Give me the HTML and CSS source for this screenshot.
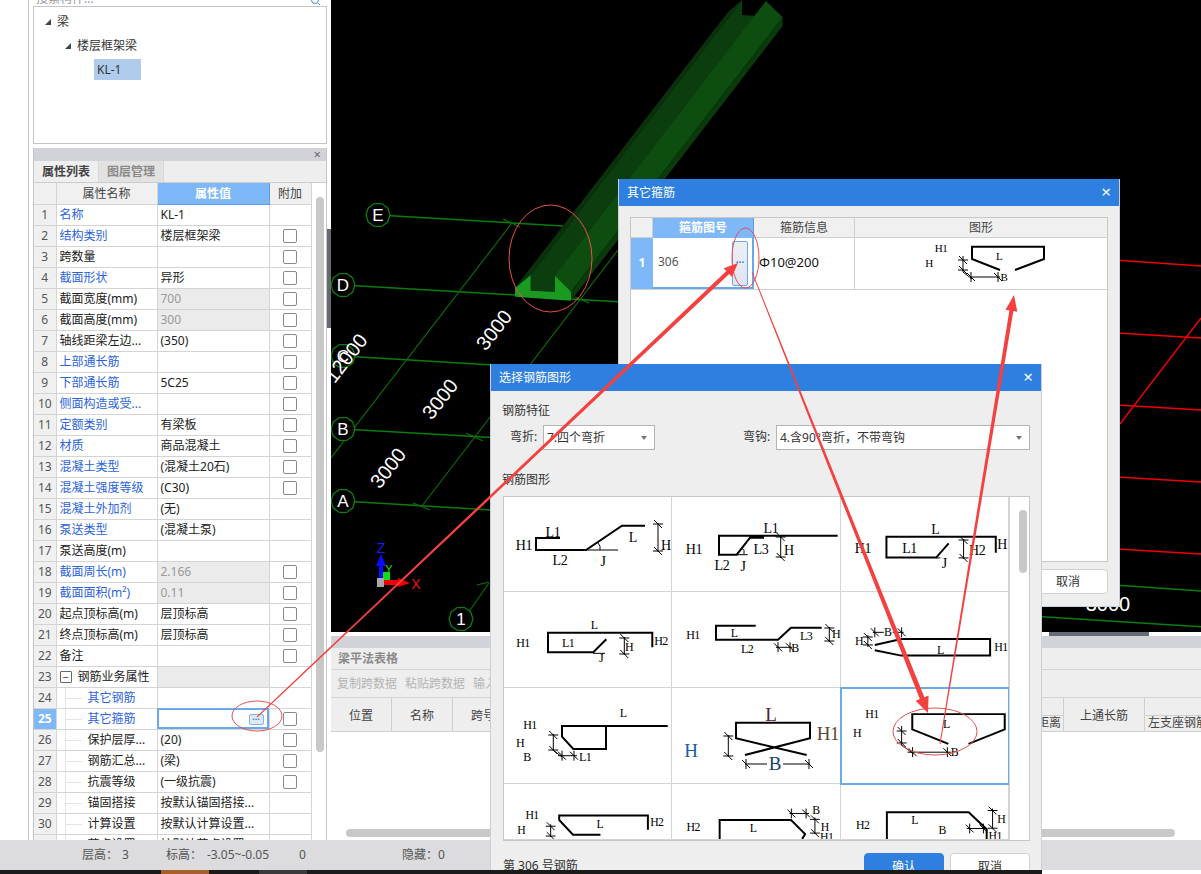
FILE: index.html
```html
<!DOCTYPE html>
<html lang="zh">
<head>
<meta charset="utf-8">
<title>其它箍筋</title>
<link rel="stylesheet" href="styles.css">
</head>
<body>
<svg class="defs" aria-hidden="true">
  <g id="tv"><path d="M-5 0H5M-4-4L4 4"/></g>
  <g id="th"><path d="M0-5V5M-4-4L4 4"/></g>
  <polygon id="oct" points="12,0 9.7,7 3.7,11.4 -3.7,11.4 -9.7,7 -12,0 -9.7,-7 -3.7,-11.4 3.7,-11.4 9.7,-7"/>
</svg>
<div class="app">
  <div class="main">
    <div class="rail"></div>
    <aside class="side">
      <section class="tree">
        <div class="search"><span>搜索构件...</span>
          <svg class="search-ico" viewBox="0 0 10 6"><circle cx="4" cy="0" r="3.5"/><path d="M6.5 2.5L9 5"/></svg>
        </div>
        <div class="tree-box">
          <div class="node n1"><i class="tri"></i>梁</div>
          <div class="node n2"><i class="tri"></i>楼层框架梁</div>
          <div class="node n3"><span class="picked">KL-1</span></div>
        </div>
      </section>
      <section class="props">
        <div class="dock"><span class="dock-x">×</span></div>
        <div class="tabs"><span class="tab on">属性列表</span><span class="tab">图层管理</span></div>
        <div class="grid-wrap">
          <table class="ptable">
            <colgroup><col class="c0"><col class="c1"><col class="c2"><col class="c3"></colgroup>
            <thead><tr><th></th><th>属性名称</th><th class="hot">属性值</th><th>附加</th></tr></thead>
            <tbody>
              <tr><td class="no">1</td><td class="lnk">名称</td><td>KL-1</td><td></td></tr>
              <tr><td class="no">2</td><td class="lnk">结构类别</td><td>楼层框架梁</td><td><i class="cb"></i></td></tr>
              <tr><td class="no">3</td><td>跨数量</td><td></td><td><i class="cb"></i></td></tr>
              <tr><td class="no">4</td><td class="lnk">截面形状</td><td>异形</td><td><i class="cb"></i></td></tr>
              <tr><td class="no">5</td><td>截面宽度(mm)</td><td class="ro">700</td><td><i class="cb"></i></td></tr>
              <tr><td class="no">6</td><td>截面高度(mm)</td><td class="ro">300</td><td><i class="cb"></i></td></tr>
              <tr><td class="no">7</td><td>轴线距梁左边...</td><td>(350)</td><td><i class="cb"></i></td></tr>
              <tr><td class="no">8</td><td class="lnk">上部通长筋</td><td></td><td><i class="cb"></i></td></tr>
              <tr><td class="no">9</td><td class="lnk">下部通长筋</td><td>5C25</td><td><i class="cb"></i></td></tr>
              <tr><td class="no">10</td><td class="lnk">侧面构造或受...</td><td></td><td><i class="cb"></i></td></tr>
              <tr><td class="no">11</td><td class="lnk">定额类别</td><td>有梁板</td><td><i class="cb"></i></td></tr>
              <tr><td class="no">12</td><td class="lnk">材质</td><td>商品混凝土</td><td><i class="cb"></i></td></tr>
              <tr><td class="no">13</td><td class="lnk">混凝土类型</td><td>(混凝土20石)</td><td><i class="cb"></i></td></tr>
              <tr><td class="no">14</td><td class="lnk">混凝土强度等级</td><td>(C30)</td><td><i class="cb"></i></td></tr>
              <tr><td class="no">15</td><td class="lnk">混凝土外加剂</td><td>(无)</td><td></td></tr>
              <tr><td class="no">16</td><td class="lnk">泵送类型</td><td>(混凝土泵)</td><td></td></tr>
              <tr><td class="no">17</td><td>泵送高度(m)</td><td></td><td></td></tr>
              <tr><td class="no">18</td><td class="lnk">截面周长(m)</td><td class="ro">2.166</td><td><i class="cb"></i></td></tr>
              <tr><td class="no">19</td><td class="lnk">截面面积(m²)</td><td class="ro">0.11</td><td><i class="cb"></i></td></tr>
              <tr><td class="no">20</td><td>起点顶标高(m)</td><td>层顶标高</td><td><i class="cb"></i></td></tr>
              <tr><td class="no">21</td><td>终点顶标高(m)</td><td>层顶标高</td><td><i class="cb"></i></td></tr>
              <tr><td class="no">22</td><td>备注</td><td></td><td><i class="cb"></i></td></tr>
              <tr class="group"><td class="no">23</td><td><span class="minus">−</span>钢筋业务属性</td><td class="ro"></td><td></td></tr>
              <tr><td class="no">24</td><td class="sub lnk">其它钢筋</td><td></td><td></td></tr>
              <tr><td class="no cur">25</td><td class="sub lnk">其它箍筋</td><td class="edit"><span class="more">···</span></td><td><i class="cb"></i></td></tr>
              <tr><td class="no">26</td><td class="sub">保护层厚...</td><td>(20)</td><td><i class="cb"></i></td></tr>
              <tr><td class="no">27</td><td class="sub">钢筋汇总...</td><td>(梁)</td><td><i class="cb"></i></td></tr>
              <tr><td class="no">28</td><td class="sub">抗震等级</td><td>(一级抗震)</td><td><i class="cb"></i></td></tr>
              <tr><td class="no">29</td><td class="sub">锚固搭接</td><td>按默认锚固搭接...</td><td></td></tr>
              <tr><td class="no">30</td><td class="sub">计算设置</td><td>按默认计算设置...</td><td></td></tr>
              <tr><td class="no">31</td><td class="sub">节点设置</td><td>按默认节点设置...</td><td></td></tr>
            </tbody>
          </table>
          <div class="vscroll"><span class="vthumb"></span></div>
        </div>
      </section>
    </aside>
    <div class="work">
      <div class="viewport">
        <span class="side-tab"></span>
        <svg class="cad" viewBox="331 0 870 632">
          <g class="gl">
            <path d="M378 215L563 226"/>
            <path d="M343 285L515 295M571 299L640 303"/>
            <path d="M343 356L640 374"/>
            <path d="M343 429L640 446"/>
            <path d="M343 501L640 519"/>
            <path d="M1100 584L1201 591M1042 616.7L1201 626.7"/>
          </g>
          <g class="gt">
            <path d="M512 223L331 458"/>
            <path d="M618 250L422 506"/>
            <path d="M503 219L520 227M575 297L589 303M466 433L483 441M413 503L430 510"/>
            <path d="M468 613L489 583M477 585L489 582"/>
          </g>
          <g class="rl">
            <path d="M1100 259L1201 266M1100 332L1201 338M1100 404L1201 410M1100 476L1201 482M1100 548L1201 554"/>
            <path d="M1120 424L1201 318"/>
          </g>
          <polygon class="b-w1" points="515,288 530.7,275 742,0 728,12"/>
          <polygon class="b-ch" points="530.7,275 530.7,290.7 555,291.7 755,15.7 742,15 742,0"/>
          <polygon class="b-w2" points="555,291.7 555,276 766,1 782.7,17.3 571,291.7"/>
          <polygon class="b-w2" points="555,291.7 755,15.7 766,1 555,276"/>
          <polygon class="b-ed" points="571,291.7 571,300.7 782.7,26 782.7,17.3"/>
          <polygon class="b-fr" points="515,288 530.7,275 530.7,290.7 555,291.7 555,276 571,291.7 571,300.7 515,296.7"/>
          <g class="bub">
            <use href="#oct" x="378" y="215"/><use href="#oct" x="343" y="285"/><use href="#oct" x="343" y="356"/>
            <use href="#oct" x="343" y="429"/><use href="#oct" x="343" y="501"/><use href="#oct" x="461" y="619"/>
          </g>
          <g class="cadtxt">
            <text x="378" y="221">E</text><text x="343" y="291">D</text><text x="343" y="362">C</text>
            <text x="343" y="435">B</text><text x="343" y="507">A</text><text x="461" y="625">1</text>
            <text class="dim-t" transform="translate(494 330) rotate(-52)" y="7">3000</text>
            <text class="dim-t" transform="translate(440 399) rotate(-52)" y="7">3000</text>
            <text class="dim-t" transform="translate(388 468) rotate(-52)" y="7">3000</text>
            <text class="dim-t" transform="translate(346 358) rotate(-52)" y="7">12000</text>
            <text class="dim-t" x="1108" y="611">3000</text>
          </g>
          <g class="gizmo">
            <path class="g-blue" d="M379 578V566H376L381 554L386 566H383V578Z"/>
            <rect class="g-green" x="383" y="572" width="7" height="8"/>
            <rect class="g-gray" x="377" y="578" width="7" height="9"/>
            <path class="g-red" d="M384 580H398V578L410 583L398 587V585H384Z"/>
            <text class="t-z" x="381" y="553">Z</text>
            <text class="t-y" x="389" y="573">Y</text>
            <text class="t-x" x="416" y="589">X</text>
          </g>
        </svg>
      </div>
      <div class="seam"><span class="seam-tab"></span></div>
      <section class="lower">
        <div class="dock"></div>
        <div class="lower-title">梁平法表格</div>
        <div class="lower-tools"><span>复制跨数据</span><span>粘贴跨数据</span><span>输入当前列数据</span></div>
        <div class="lower-head">
          <span class="lh w61">位置</span>
          <span class="lh w61">名称</span>
          <span class="lh w61">跨号</span>
          <span class="lh fill"></span>
          <span class="lh low w22"><b>轴线距离</b></span>
          <span class="lh w81">上通长筋</span>
          <span class="lh low grow"><b class="l">左支座钢筋</b></span>
        </div>
        <div class="lower-body"><span class="hthumb"></span></div>
      </section>
    </div>
  </div>
  <footer class="status">
    <span class="s1">层高：</span><span class="s2">3</span>
    <span class="s3">标高：</span><span class="s4">-3.05~-0.05</span>
    <span class="s5">0</span>
    <span class="s6">隐藏：0</span>
  </footer>
  <div class="taskbar"><span class="tb-a"></span><span class="tb-b"></span></div>
</div>

<div class="win win-a">
  <header class="win-bar">其它箍筋<span class="win-x">×</span></header>
  <div class="win-a-body">
    <div class="stir">
      <div class="stir-h"><span class="h0"></span><span class="h1 hot">箍筋图号</span><span class="h2">箍筋信息</span><span class="h3">图形</span></div>
      <div class="stir-r">
        <span class="r0">1</span>
        <span class="r1">306<span class="r1-btn">···</span></span>
        <span class="r2">Φ10@200</span>
        <span class="r3">
          <svg class="shape" viewBox="855 238 252 51">
            <path class="bar" d="M1000 270L972 259V246.7H1044V259L1015 270"/>
            <path class="dim" d="M963 256V272M970 277H1000M963 272L972 279"/>
            <use class="tk" href="#tv" x="963" y="260"/><use class="tk" href="#tv" x="963" y="270"/>
            <use class="tk" href="#th" x="971" y="277"/><use class="tk" href="#th" x="998" y="277"/>
            <g class="lab xs"><text x="941" y="248">H1</text><text x="929" y="263">H</text><text x="999" y="256">L</text><text x="1004" y="277">B</text></g>
          </svg>
        </span>
      </div>
    </div>
    <div class="win-a-foot"><span class="btn pri">确认</span><span class="btn">取消</span></div>
  </div>
</div>

<div class="win win-b">
  <header class="win-bar">选择钢筋图形<span class="win-x">×</span></header>
  <div class="win-b-body">
    <div class="cap">钢筋特征</div>
    <div class="pick-row">
      <label class="lb-a">弯折:</label><span class="sel sel-a">7.四个弯折<i class="caret"></i></span>
      <label class="lb-b">弯钩:</label><span class="sel sel-b">4.含90°弯折，不带弯钩<i class="caret"></i></span>
    </div>
    <div class="cap cap2">钢筋图形</div>
    <div class="gallery">
      <div class="cells">
        <div class="cell">
          <svg class="shape" viewBox="504 497 167 94">
            <path class="bar" d="M560 538H536V550H586L622 525.7H645"/>
            <path class="dim" d="M586 550H618M658 523V552M598 543Q601 546 600 550"/>
            <use class="tk" href="#tv" x="658" y="524"/><use class="tk" href="#tv" x="658" y="551"/>
            <g class="lab"><text x="553" y="532">L1</text><text x="524" y="545">H1</text><text x="560" y="560">L2</text><text x="603" y="561">J</text><text x="633" y="537">L</text><text x="666" y="545">H</text></g>
          </svg>
        </div>
        <div class="cell">
          <svg class="shape" viewBox="672 497 168 94">
            <path class="bar" d="M837.7 535.7H719V554.7H736.7L750 537.7H763V535.7"/>
            <path class="dim" d="M736.7 554.7H747.7M780.7 535V558M742 548Q745 550 744 554"/>
            <use class="tk" href="#tv" x="780.7" y="537"/><use class="tk" href="#tv" x="780.7" y="557"/>
            <g class="lab"><text x="771" y="528">L1</text><text x="694" y="549">H1</text><text x="761" y="549">L3</text><text x="789" y="550">H</text><text x="722" y="565">L2</text><text x="743" y="566">J</text></g>
          </svg>
        </div>
        <div class="cell">
          <svg class="shape" viewBox="841 497 168 94">
            <path class="bar" d="M996.7 552.7V536.7H886.7V557.7H936.7L949.3 543.3"/>
            <path class="dim" d="M936.7 558H941M964.3 539V559"/>
            <use class="tk" href="#tv" x="964.3" y="540"/><use class="tk" href="#tv" x="964.3" y="558"/>
            <g class="lab"><text x="936" y="529">L</text><text x="863" y="549">H1</text><text x="910" y="549">L1</text><text x="978" y="551">H2</text><text x="1003" y="545">H</text><text x="945" y="564">J</text></g>
          </svg>
        </div>
        <div class="cell">
          <svg class="shape" viewBox="504 592 167 95">
            <path class="bar" d="M652.3 647.3V632.7H548V652.3H593.3L606.3 639.3"/>
            <path class="dim" d="M593 653.3H605M624.3 637V655"/>
            <use class="tk" href="#tv" x="624.3" y="638"/><use class="tk" href="#tv" x="624.3" y="654"/>
            <g class="lab sm"><text x="594" y="625">L</text><text x="523" y="643">H1</text><text x="568" y="643">L1</text><text x="629" y="647">H</text><text x="661" y="641">H2</text><text x="601" y="658">J</text></g>
          </svg>
        </div>
        <div class="cell">
          <svg class="shape" viewBox="672 592 168 95">
            <path class="bar" d="M755.7 625.7H716V639.7H778L791 627.7H821.7"/>
            <path class="dim" d="M776 647.3H792M829.3 627V642"/>
            <use class="tk" href="#th" x="778" y="647.3"/><use class="tk" href="#th" x="790" y="647.3"/>
            <use class="tk" href="#tv" x="829.3" y="628"/><use class="tk" href="#tv" x="829.3" y="641"/>
            <g class="lab sm"><text x="693" y="635">H1</text><text x="734" y="633">L</text><text x="806" y="636">L3</text><text x="836" y="634">H</text><text x="747" y="649">L2</text><text x="795" y="648">B</text></g>
          </svg>
        </div>
        <div class="cell">
          <svg class="shape" viewBox="841 592 168 95">
            <path class="bar" d="M875 645L901.7 639H991V655.7H901.7L875 650.3"/>
            <path class="dim" d="M873 632.3H884M893 632.3H904M868 635V647"/>
            <use class="tk" href="#th" x="875" y="632.3"/><use class="tk" href="#th" x="902" y="632.3"/>
            <use class="tk" href="#tv" x="868" y="637"/><use class="tk" href="#tv" x="868" y="645"/>
            <g class="lab sm"><text x="859" y="641">H</text><text x="888" y="632">B</text><text x="941" y="650">L</text><text x="1002" y="647">H1</text></g>
          </svg>
        </div>
        <div class="cell">
          <svg class="shape" viewBox="504 688 167 95">
            <path class="bar" d="M667.7 726H562V736.7L573.3 749H606V726"/>
            <path class="dim" d="M553.3 734V751M558 755.7H577M553 750L562 757"/>
            <use class="tk" href="#tv" x="553.3" y="735"/><use class="tk" href="#tv" x="553.3" y="750"/>
            <use class="tk" href="#th" x="562" y="755.7"/><use class="tk" href="#th" x="574" y="755.7"/>
            <g class="lab sm"><text x="623" y="713">L</text><text x="530" y="725">H1</text><text x="520" y="743">H</text><text x="527" y="757">B</text><text x="585" y="757">L1</text></g>
          </svg>
        </div>
        <div class="cell">
          <svg class="shape" viewBox="672 688 168 95">
            <path class="bar" d="M806.7 755L736 738.3V722.7H810V738.3L745 755"/>
            <path class="dim" d="M728.3 735V757M745 764H767M783 764H810"/>
            <use class="tk" href="#tv" x="728.3" y="736"/><use class="tk" href="#tv" x="728.3" y="756"/>
            <use class="tk" href="#th" x="746" y="764"/><use class="tk" href="#th" x="809" y="764"/>
            <g class="lab lg"><text class="c-l" x="771" y="714">L</text><text class="c-h" x="691" y="750">H</text><text class="c-h1" x="828" y="733">H1</text><text class="c-b" x="775" y="763">B</text></g>
          </svg>
        </div>
        <div class="cell sel-cell">
          <svg class="shape" viewBox="841 688 168 95">
            <path class="bar" d="M949 744L912.7 729.3V714H1005.7V729.3L969.3 744"/>
            <path class="dim" d="M902 726V745M908 752.3H952M902 745L914 754"/>
            <use class="tk" href="#tv" x="902" y="731"/><use class="tk" href="#tv" x="902" y="743"/>
            <use class="tk" href="#th" x="913" y="752.3"/><use class="tk" href="#th" x="948" y="752.3"/>
            <g class="lab sm"><text x="872" y="714">H1</text><text x="857" y="733">H</text><text x="947" y="724">L</text><text x="955" y="752">B</text></g>
          </svg>
        </div>
        <div class="cell">
          <svg class="shape" viewBox="504 784 167 56">
            <path class="bar" d="M649 830.7V816H558.7V820.7L572.7 835.7H600.7"/>
            <path class="dim" d="M550 825V838"/>
            <use class="tk" href="#tv" x="550" y="827"/><use class="tk" href="#tv" x="550" y="837"/>
            <g class="lab sm"><text x="531" y="816">H1</text><text x="520" y="831">H</text><text x="600" y="825">L</text><text x="658" y="823">H2</text></g>
          </svg>
        </div>
        <div class="cell">
          <svg class="shape" viewBox="672 784 168 56">
            <path class="bar" d="M719 840V820.7H791.7L806 835L803 840"/>
            <path class="dim" d="M790 814H810M816 818V835"/>
            <use class="tk" href="#th" x="792" y="814"/><use class="tk" href="#th" x="807" y="814"/>
            <use class="tk" href="#tv" x="816" y="820"/><use class="tk" href="#tv" x="816" y="834"/>
            <g class="lab sm"><text x="692" y="828">H2</text><text x="753" y="829">L</text><text x="817" y="811">B</text><text x="826" y="828">H</text><text x="828" y="838">H1</text></g>
          </svg>
        </div>
        <div class="cell">
          <svg class="shape" viewBox="841 784 168 56">
            <path class="bar" d="M886.7 840V812.7H970L988.3 830V840"/>
            <path class="dim" d="M994.3 809V830M968 829.3H987"/>
            <use class="tk" href="#tv" x="994.3" y="811"/><use class="tk" href="#tv" x="994.3" y="829"/>
            <use class="tk" href="#th" x="971" y="829.3"/><use class="tk" href="#th" x="985" y="829.3"/>
            <g class="lab sm"><text x="862" y="826">H2</text><text x="915" y="821">L</text><text x="943" y="831">B</text><text x="1003" y="820">H</text><text x="997" y="837">H1</text></g>
          </svg>
        </div>
      </div>
      <div class="gal-scroll"><span class="gal-thumb"></span></div>
    </div>
    <div class="win-b-foot">
      <span class="count">第 306 号钢筋</span>
      <span class="btn pri">确认</span><span class="btn">取消</span>
    </div>
  </div>
</div>

<svg class="marks" viewBox="0 0 1201 874">
  <ellipse cx="257" cy="716" rx="25" ry="15"/>
  <ellipse cx="550.5" cy="258.5" rx="41.5" ry="53.5"/>
  <ellipse cx="745.5" cy="258" rx="13.5" ry="30"/>
  <ellipse cx="935" cy="731.5" rx="42" ry="23.5"/>
  <path class="arrow" d="M256.7 716.6L726.4 271.1L723.7 268.2L738 263L731.9 277L729.2 274.1L257.3 717.4Z"/>
  <path class="arrow" d="M751.6 272.1L919.8 699L915.6 700.7L928 713L928.6 695.5L924.4 697.2L752.4 271.9Z"/>
  <path class="arrow" d="M939.5 743.9L1009.4 310.5L1005.5 309.8L1014 295L1017.3 311.8L1013.4 311.1L940.5 744.1Z"/>
</svg>
</body>
</html>
```
FILE: styles.css
```css
* { box-sizing: border-box; }
html, body { margin: 0; padding: 0; height: 100%; overflow: hidden; }
body { width: 1201px; height: 874px; position: relative; background: #fff; color: #222; font: 12px/1.2 "Noto Sans", "Noto Sans CJK SC", sans-serif; }
.defs { position: absolute; width: 0; height: 0; }

.app { width: 1201px; height: 874px; display: grid; grid-template-rows: 840px 30px 4px; }
.main { display: flex; min-height: 0; overflow: hidden; }
.rail { width: 29px; border-right: 1px solid #c8c8cc; }
.side { margin-left: 4px; margin-right: 4px; flex: none; width: 294px; display: flex; flex-direction: column; overflow: hidden; }
.work { width: 870px; flex: none; display: flex; flex-direction: column; }

/* project tree */
.tree { height: 144px; flex: none; margin-bottom: 4px; display: flex; flex-direction: column; }
.search { height: 6px; overflow: hidden; position: relative; padding-left: 3px; color: #999; }
.search span { display: block; margin-top: -9px; line-height: 16px; }
.search-ico { position: absolute; right: 6px; top: 0; width: 10px; height: 6px; fill: none; stroke: #4a90d9; stroke-width: 1; }
.tree-box { flex: 1; border: 1px solid #c4c4c8; background: #fff; }
.node { height: 21px; line-height: 21px; display: flex; align-items: center; color: #333; }
.n1 { margin-top: 4px; padding-left: 11px; }
.n2 { margin-top: 3px; padding-left: 31px; }
.n3 { margin-top: 3px; padding-left: 60px; }
.tri { width: 0; height: 0; margin-right: 6px; border-style: solid; border-width: 0 0 6px 6px; border-color: transparent transparent #444 transparent; }
.picked { width: 47px; height: 21px; padding-left: 3px; background: #b0ccec; }

/* properties */
.props { flex: 1; min-height: 0; display: flex; flex-direction: column; border-left: 1px solid #c4c4c8; border-right: 1px solid #c4c4c8; }
.dock { height: 13px; flex: none; background: #d2d3d8; position: relative; }
.dock-x { position: absolute; right: 5px; top: -2px; font-size: 13px; line-height: 16px; color: #666; }
.tabs { height: 22px; flex: none; display: flex; background: #eeeeee; border-bottom: 1px solid #ccc; }
.tab { width: 65px; text-align: center; line-height: 22px; background: #e2e2e2; color: #8a8a8a; font-weight: 700; border-right: 1px solid #d8d8d8; }
.tab.on { background: #efefef; color: #444; }
.grid-wrap { flex: 1; display: flex; min-height: 0; overflow: hidden; }
.ptable { width: 277px; flex: none; height: max-content; border-collapse: collapse; table-layout: fixed; }
.c0 { width: 22px; } .c1 { width: 101px; } .c2 { width: 112px; } .c3 { width: 42px; }
.ptable th, .ptable td { height: 21px; padding: 0 3px; border: 1px solid #d4d4d4; border-top: 0; white-space: nowrap; overflow: hidden; line-height: 19px; text-align: left; position: relative; }
.ptable th:first-child, .ptable td:first-child { border-left: 0; }
.ptable th { background: #f0f0f0; font-weight: 400; text-align: center; color: #444; }
.ptable th.hot { background: #7eb8f8; color: #fff; font-weight: 700; border-color: #5d9de8; }
.ptable td.no { background: #f0f0f0; text-align: center; color: #555; padding: 0; font-size: 12px; }
.ptable td.cur { background: #7eb8f8; color: #fff; font-weight: 700; }
.ptable td.lnk { color: #2b63dd; }
.ptable td.ro { background: #ebebeb; color: #999; }
.ptable td:last-child { padding: 0; }
.cb { display: block; width: 14px; height: 14px; margin-left: 13px; border: 1px solid #8a8a8a; border-radius: 2px; background: #fff; }
.ptable td.sub { padding-left: 31px; }
.ptable td.sub::before { content: ""; position: absolute; left: 8px; top: 0; bottom: 0; width: 1px; background: #e4e4e4; }
.ptable td.sub::after { content: ""; position: absolute; left: 9px; top: 10px; width: 16px; height: 1px; background: #e4e4e4; }
.group td:nth-child(2) { padding-left: 21px; }
.minus { position: absolute; left: 3px; top: 4px; width: 12px; height: 12px; border: 1px solid #666; border-radius: 1px; line-height: 9px; text-align: center; font-size: 11px; color: #333; }
.ptable td.edit { outline: 2px solid #6aa8e8; outline-offset: -2px; }
.more { position: absolute; right: 5px; top: 5px; width: 15px; height: 11px; border: 1px solid #7db3ea; border-radius: 2px; background: #dfe9f6; color: #3f7fc4; font-size: 9px; line-height: 8px; text-align: center; font-weight: 700; letter-spacing: 0; }
.vscroll { flex: 1; background: #fff; position: relative; }
.vthumb { position: absolute; left: 4px; top: 14px; width: 8px; height: 555px; border-radius: 4px; background: #c8c8c8; }

/* viewport */
.viewport { height: 632px; flex: none; background: #000; position: relative; }
.side-tab { position: absolute; left: -4px; top: 229px; width: 4px; height: 99px; background: #64696f; }
.cad { display: block; width: 870px; height: 632px; }
.gl path, .gt path, .rl path { fill: none; }
.gl { stroke: #0b7d0d; stroke-width: 1.5; }
.gt { stroke: #0a700c; stroke-width: 1.1; }
.rl { stroke: #f00000; stroke-width: 1.4; }
.b-w1 { fill: #0a300c; }
.b-ch { fill: #0c3d0e; }
.b-w2 { fill: #0e4d10; }
.b-ed { fill: #0a3a0c; }
.b-fr { fill: #1a9a1e; }
.bub use { fill: #000; stroke: #0b7d0d; stroke-width: 1.3; }
.cadtxt text { fill: #fff; font: 17px "Liberation Sans", sans-serif; text-anchor: middle; }
.cadtxt .dim-t { font-size: 20px; }
.g-blue { fill: #0a0aff; }
.g-green { fill: #10e010; }
.g-gray { fill: #a8a8a8; }
.g-red { fill: #f00000; }
.gizmo text { font: 14px "Liberation Sans", sans-serif; text-anchor: middle; }
.t-z { fill: #1a1aff; } .t-y { fill: #18e018; font-size: 11px !important; } .t-x { fill: #f01010; }
.seam { height: 4px; flex: none; position: relative; background: #fff; }
.seam-tab { position: absolute; left: 718px; top: 0; width: 100px; height: 4px; background: #646c75; }

/* lower panel */
.lower { flex: 1; min-height: 0; display: flex; flex-direction: column; background: #fff; }
.lower .dock { height: 12px; }
.lower-title { height: 22px; flex: none; padding-left: 7px; line-height: 21px; font-size: 12px; font-weight: 700; color: #8a8a8a; background: #eeeeee; border-bottom: 1px solid #d4d4d4; }
.lower-tools { height: 28px; flex: none; display: flex; gap: 8px; padding-left: 6px; line-height: 28px; color: #b4b4b4; background: #eeeeee; border-bottom: 1px solid #d4d4d4; white-space: nowrap; overflow: hidden; }
.lower-head { height: 34px; flex: none; display: flex; background: #eeeeee; border-bottom: 1px solid #cfcfcf; overflow: hidden; }
.lh { display: flex; align-items: center; justify-content: center; border-right: 1px solid #cfcfcf; color: #444; flex: none; padding-top: 3px; }
.w61 { width: 61px; } .w81 { width: 81px; }
.fill { width: 528px; }
.w22 { width: 22px; }
.grow { flex: 1; border-right: 0; }
.low { position: relative; overflow: hidden; }
.low::before { content: ""; position: absolute; left: 0; right: 0; top: 17px; height: 1px; background: #cfcfcf; }
.low b { position: absolute; top: 18px; right: 2px; font-weight: 400; white-space: nowrap; }
.low b.l { left: 3px; right: auto; }
.lower-body { flex: 1; position: relative; }
.hthumb { position: absolute; left: 15px; top: 97px; width: 829px; height: 8px; border-radius: 4px; background: #c8c8c8; }

/* status */
.status { background: #dcdcde; display: flex; align-items: center; color: #555; font-size: 12px; padding-top: 1px; white-space: nowrap; }
.s1 { margin-left: 82px; width: 40px; }
.s3 { margin-left: 37px; width: 41px; }
.s4 { width: 92px; }
.s5 { width: 103px; }
.taskbar { position: relative; z-index: 5; width: 1042px; background: #1a1a1a; display: block; }
.tb-a, .tb-b { position: absolute; top: 0; bottom: 0; width: 48px; }
.tb-a { left: 161px; background: #a5602a; }
.tb-b { left: 259px; background: #3a3a3a; }

/* dialogs */
.win { position: absolute; background: #eeeeee; display: flex; flex-direction: column; border: 1px solid #c8d0dc; border-top: 0; overflow: hidden; }
.win-a { left: 618px; top: 179px; width: 502px; height: 428px; }
.win-b { left: 490px; top: 364px; width: 552px; height: 510px; z-index: 1; }
.win-bar { height: 27px; flex: none; margin: 0 -1px; padding-left: 9px; line-height: 27px; background: #2e7fe0; color: #fff; position: relative; font-size: 12px; }
.win-x { position: absolute; right: 9px; top: 0; font-size: 17px; line-height: 26px; }
.win-a-body { flex: 1; padding: 11px 11px 12px 11px; display: flex; flex-direction: column; min-height: 0; }
.stir { flex: 1; background: #fff; border: 1px solid #c8c8c8; }
.stir-h { height: 20px; display: flex; background: #f0f0f0; border-bottom: 1px solid #d0d0d0; text-align: center; line-height: 20px; color: #444; }
.stir-h span { flex: none; height: 20px; border-right: 1px solid #d0d0d0; }
.h0 { width: 22px; }
.h1 { width: 101px; }
.h1.hot { background: #7eb8f8; color: #fff; font-weight: 700; border-color: #5d9de8 !important; }
.h2 { width: 101px; }
.h3 { width: 252px; border-right: 0 !important; }
.stir-r { height: 52px; display: flex; border-bottom: 1px solid #d0d0d0; }
.stir-r > span { flex: none; height: 51px; display: flex; align-items: center; }
.r0 { width: 22px; background: #7eb8f8; color: #fff; font-weight: 700; justify-content: center; }
.r1 { width: 101px; padding-left: 5px; border: 2px solid #6aa8e8; border-left: 0; border-top: 0; color: #555; position: relative; }
.r1-btn { position: absolute; right: 4px; top: 3px; width: 16px; height: 45px; border: 1px solid #6aa8e8; border-radius: 2px; background: linear-gradient(#eef0f5, #dfe4ef); color: #3f7fc4; text-align: center; line-height: 41px; font-size: 10px; letter-spacing: 0; font-weight: 700; }
.r2 { width: 101px; padding-left: 5px; padding-bottom: 2px; border-right: 1px solid #d0d0d0; color: #111; font-family: "Noto Sans", sans-serif; font-size: 13px; white-space: nowrap; }
.r3 { width: 252px; }
.win-a-foot { flex: none; margin-top: 7px; display: flex; justify-content: flex-end; gap: 8px; }
.btn { width: 80px; height: 25px; line-height: 23px; text-align: center; background: #fff; border: 1px solid #d0d0d0; border-radius: 4px; color: #333; flex: none; }
.btn.pri { background: #2e7fe0; border-color: #2e7fe0; color: #fff; }

.win-b-body { flex: 1; padding: 0 11px; min-height: 0; display: flex; flex-direction: column; }
.cap { margin-top: 12px; height: 16px; line-height: 16px; color: #333; }
.cap2 { margin-top: 22px; }
.pick-row { display: flex; align-items: center; margin-top: 6px; height: 25px; }
.lb-a { margin-left: 8px; width: 33px; color: #333; white-space: nowrap; }
.lb-b { margin-left: 88px; width: 33px; color: #333; white-space: nowrap; }
.sel { height: 25px; line-height: 24px; padding-left: 3px; border: 1px solid #b4b4b4; background: #fff; position: relative; color: #333; white-space: nowrap; }
.sel-a { width: 112px; }
.sel-b { width: 254px; }
.caret { position: absolute; right: 7px; top: 10px; width: 0; height: 0; border-style: solid; border-width: 4px 3px 0 3px; border-color: #777 transparent transparent transparent; }
.gallery { margin-top: 8px; margin-left: 1px; width: 527px; height: 345px; flex: none; display: flex; background: #fff; border: 1px solid #c8c8c8; overflow: hidden; }
.cells { width: 505px; flex: none; display: grid; grid-template-columns: 168px 169px 168px; grid-template-rows: 95px 96px 96px 56px; }
.cell { border-right: 1px solid #d4d4d4; border-bottom: 1px solid #d4d4d4; background: #fff; }
.sel-cell { outline: 2px solid #6daae8; outline-offset: -1px; position: relative; }
.gal-scroll { flex: 1; position: relative; border-left: 1px solid #d4d4d4; }
.gal-thumb { position: absolute; left: 9px; top: 13px; width: 8px; height: 63px; border-radius: 4px; background: #c8c8c8; }
.win-b-foot { margin-top: 12px; display: flex; align-items: flex-start; gap: 6px; }
.win-b-foot .count { margin-left: 1px; margin-top: 6px; width: 355px; color: #333; }
.win-b-foot .btn { height: 28px; line-height: 26px; }

/* rebar sketches */
.shape { display: block; width: 100%; height: 100%; }
.bar { fill: none; stroke: #000; stroke-width: 2; }
.dim { fill: none; stroke: #000; stroke-width: 1; }
.tk { fill: none; stroke: #000; stroke-width: 1; }
.lab text { font: 14px "Liberation Serif", serif; fill: #000; text-anchor: middle; dominant-baseline: central; letter-spacing: -.3px; }
.lab.sm text { font-size: 12px; letter-spacing: -.6px; }
.lab.xs text { font-size: 11px; letter-spacing: -.5px; }
.lab.lg text { font-size: 19px; }
.lab .c-l { fill: #5c1a3c; }
.lab .c-h { fill: #1a5fa5; }
.lab .c-h1 { fill: #5a4a3a; }
.lab .c-b { fill: #1d3c66; }

/* annotation layer */
.marks { position: absolute; left: 0; top: 0; width: 1201px; height: 874px; z-index: 3; pointer-events: none; }
.marks ellipse { fill: none; stroke: #e85050; stroke-width: 1; }
.arrow { fill: #f54040; }
```
